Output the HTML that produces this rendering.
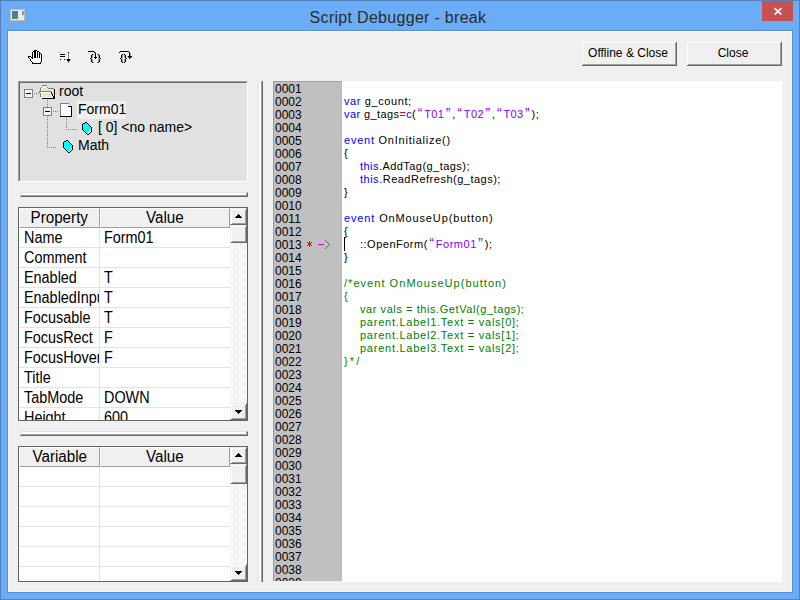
<!DOCTYPE html>
<html><head><meta charset="utf-8">
<style>
*{margin:0;padding:0;box-sizing:border-box}
html,body{width:800px;height:600px;overflow:hidden}
body{position:relative;background:#6aacf6;font-family:"Liberation Sans",sans-serif;color:#000}
.a{position:absolute}
#frame{left:0;top:0;width:800px;height:600px;border:1px solid #5182bd}
#title{left:-2px;top:9px;width:800px;text-align:center;font-size:16px;letter-spacing:0.3px;color:#2c2c2c;white-space:nowrap}
#xbtn{left:762px;top:1px;width:31px;height:20px;background:#c75050}
#client{left:7px;top:30px;width:786px;height:563px;border:1px solid #5a8fd0;background:#f0f0f0}
#client2{left:8px;top:31px;width:784px;height:561px;border:1px solid #f9f7f1}
.btn{height:23px;background:#f0f0f0;border-top:1px solid #fff;border-left:1px solid #fff;box-shadow:inset -1px -1px 0 #a0a0a0;font-size:12px;text-align:center;line-height:20px;padding-right:3px}
.btnout{border-right:1px solid #696969;border-bottom:1px solid #696969}
.sunk{border-top:1px solid #a0a0a0;border-left:1px solid #a0a0a0;border-right:1px solid #fff;border-bottom:1px solid #fff}
.hsplit{height:5px;border-top:1px solid #e3e3e3;border-left:1px solid #e3e3e3;border-bottom:1px solid #696969;border-right:1px solid #696969;background:#fff;box-shadow:inset -1px -1px 0 #a0a0a0}
.vsplit{width:5px;border-left:1px solid #e3e3e3;border-right:1px solid #696969;background:linear-gradient(90deg,#fff 0,#fff 2px,#a0a0a0 2px,#a0a0a0 3px)}
.grid{border:1px solid #646464;background:#fff;overflow:hidden}
.gh{position:absolute;top:0;height:20px;background:#f0f0f0;border-top:1px solid #fff;border-left:1px solid #fff;border-bottom:1px solid #a0a0a0;border-right:1px solid #a0a0a0;font-size:16px;line-height:18px;text-align:center;white-space:nowrap;overflow:hidden}
.gh span{display:inline-block;transform:scaleX(0.95)}
.row{position:absolute;left:0;height:20px;border-bottom:1px solid #e3e3e3;width:211px}
.cell{position:absolute;top:0;height:19px;font-size:16px;line-height:20px;white-space:nowrap;overflow:hidden}
.cell span{display:inline-block;transform:scaleX(0.9);transform-origin:0 0}
.vline{position:absolute;width:1px;background:#e3e3e3}
.sb{position:absolute;width:17px;background:repeating-conic-gradient(#fff 0 25%,#f0f0f0 0 50%) 0 0/2px 2px}
.sbb{position:absolute;left:0;width:17px;height:17px;background:#f0f0f0;border-top:1px solid #f0f0f0;border-left:1px solid #f0f0f0;border-right:1px solid #696969;border-bottom:1px solid #696969;box-shadow:inset 1px 1px 0 #fff,inset -1px -1px 0 #a0a0a0}
#code{left:342px;top:81px;width:440px;height:501px;background:#fff}
#gutter{left:273px;top:81px;width:69px;height:500px;background:#c0c0c0;box-shadow:inset -1px 0 0 #bababa;border-top:1px solid #a0a0a0;border-left:1px solid #a0a0a0;overflow:hidden}
.ln{position:absolute;left:1px;top:1px;font-size:12px;line-height:13px;white-space:pre}
.cd{position:absolute;left:2px;top:1px;font-size:11px;letter-spacing:0.5px;line-height:13px;white-space:pre}
.kw{color:#0000ff}.st{color:#8000ff}.rd{color:#ff0000}.cm{color:#008000}
.q{display:inline-block;width:8px;text-align:center;color:#8000ff;font-size:14px;line-height:10px}
.ind{display:inline-block;width:16px}
.tree{font-size:14px;white-space:nowrap;line-height:18px}
</style></head><body>
<div id="frame" class="a"></div>

<!-- app icon -->
<div class="a" style="left:10px;top:9px;width:15px;height:12px;background:#eeebe6;border:1px solid #c4bcb2"></div>
<div class="a" style="left:12px;top:11px;width:6px;height:8px;background:linear-gradient(160deg,#4a70b0,#3aa060)"></div>
<div class="a" style="left:22px;top:11px;width:2px;height:4px;background:#6a9ad0"></div>
<div id="title" class="a">Script Debugger - break</div>
<div id="xbtn" class="a"><svg width="31" height="20" style="position:absolute;left:0;top:0"><path d="M12.6 7.2 L19.4 13.6 M19.4 7.2 L12.6 13.6" stroke="#fff" stroke-width="1.6"/></svg></div>
<div id="client" class="a"></div>
<div id="client2" class="a"></div>

<!-- toolbar icons -->
<svg class="a" style="left:26px;top:48px" width="18" height="18" shape-rendering="crispEdges"><g fill="#fff"><rect x="10" y="3" width="1" height="1"/><rect x="7" y="4" width="1" height="1"/><rect x="10" y="4" width="1" height="1"/><rect x="12" y="4" width="1" height="1"/><rect x="14" y="4" width="1" height="1"/><rect x="7" y="5" width="1" height="1"/><rect x="10" y="5" width="1" height="1"/><rect x="12" y="5" width="1" height="1"/><rect x="7" y="6" width="1" height="1"/><rect x="10" y="6" width="1" height="1"/><rect x="12" y="6" width="1" height="1"/><rect x="14" y="6" width="1" height="1"/><rect x="7" y="7" width="1" height="1"/><rect x="10" y="7" width="1" height="1"/><rect x="12" y="7" width="1" height="1"/><rect x="14" y="7" width="1" height="1"/><rect x="7" y="8" width="1" height="1"/><rect x="10" y="8" width="1" height="1"/><rect x="12" y="8" width="1" height="1"/><rect x="14" y="8" width="1" height="1"/><rect x="3" y="9" width="1" height="1"/><rect x="4" y="9" width="1" height="1"/><rect x="7" y="9" width="1" height="1"/><rect x="10" y="9" width="1" height="1"/><rect x="12" y="9" width="1" height="1"/><rect x="14" y="9" width="1" height="1"/><rect x="4" y="10" width="1" height="1"/><rect x="5" y="10" width="1" height="1"/><rect x="7" y="10" width="1" height="1"/><rect x="8" y="10" width="1" height="1"/><rect x="9" y="10" width="1" height="1"/><rect x="10" y="10" width="1" height="1"/><rect x="11" y="10" width="1" height="1"/><rect x="12" y="10" width="1" height="1"/><rect x="13" y="10" width="1" height="1"/><rect x="14" y="10" width="1" height="1"/><rect x="5" y="11" width="1" height="1"/><rect x="6" y="11" width="1" height="1"/><rect x="7" y="11" width="1" height="1"/><rect x="8" y="11" width="1" height="1"/><rect x="9" y="11" width="1" height="1"/><rect x="10" y="11" width="1" height="1"/><rect x="11" y="11" width="1" height="1"/><rect x="12" y="11" width="1" height="1"/><rect x="13" y="11" width="1" height="1"/><rect x="14" y="11" width="1" height="1"/><rect x="5" y="12" width="1" height="1"/><rect x="6" y="12" width="1" height="1"/><rect x="7" y="12" width="1" height="1"/><rect x="8" y="12" width="1" height="1"/><rect x="9" y="12" width="1" height="1"/><rect x="10" y="12" width="1" height="1"/><rect x="11" y="12" width="1" height="1"/><rect x="12" y="12" width="1" height="1"/><rect x="13" y="12" width="1" height="1"/><rect x="14" y="12" width="1" height="1"/><rect x="6" y="13" width="1" height="1"/><rect x="7" y="13" width="1" height="1"/><rect x="8" y="13" width="1" height="1"/><rect x="9" y="13" width="1" height="1"/><rect x="10" y="13" width="1" height="1"/><rect x="11" y="13" width="1" height="1"/><rect x="12" y="13" width="1" height="1"/><rect x="13" y="13" width="1" height="1"/><rect x="14" y="13" width="1" height="1"/><rect x="7" y="14" width="1" height="1"/><rect x="8" y="14" width="1" height="1"/><rect x="9" y="14" width="1" height="1"/><rect x="10" y="14" width="1" height="1"/><rect x="11" y="14" width="1" height="1"/><rect x="12" y="14" width="1" height="1"/><rect x="13" y="14" width="1" height="1"/></g><g fill="#000"><rect x="8" y="2" width="1" height="1"/><rect x="9" y="2" width="1" height="1"/><rect x="10" y="2" width="1" height="1"/><rect x="7" y="3" width="1" height="1"/><rect x="8" y="3" width="1" height="1"/><rect x="9" y="3" width="1" height="1"/><rect x="11" y="3" width="1" height="1"/><rect x="12" y="3" width="1" height="1"/><rect x="6" y="4" width="1" height="1"/><rect x="8" y="4" width="1" height="1"/><rect x="9" y="4" width="1" height="1"/><rect x="11" y="4" width="1" height="1"/><rect x="13" y="4" width="1" height="1"/><rect x="6" y="5" width="1" height="1"/><rect x="8" y="5" width="1" height="1"/><rect x="9" y="5" width="1" height="1"/><rect x="11" y="5" width="1" height="1"/><rect x="13" y="5" width="1" height="1"/><rect x="14" y="5" width="1" height="1"/><rect x="6" y="6" width="1" height="1"/><rect x="8" y="6" width="1" height="1"/><rect x="9" y="6" width="1" height="1"/><rect x="11" y="6" width="1" height="1"/><rect x="13" y="6" width="1" height="1"/><rect x="15" y="6" width="1" height="1"/><rect x="6" y="7" width="1" height="1"/><rect x="8" y="7" width="1" height="1"/><rect x="9" y="7" width="1" height="1"/><rect x="11" y="7" width="1" height="1"/><rect x="13" y="7" width="1" height="1"/><rect x="15" y="7" width="1" height="1"/><rect x="2" y="8" width="1" height="1"/><rect x="3" y="8" width="1" height="1"/><rect x="4" y="8" width="1" height="1"/><rect x="6" y="8" width="1" height="1"/><rect x="8" y="8" width="1" height="1"/><rect x="9" y="8" width="1" height="1"/><rect x="11" y="8" width="1" height="1"/><rect x="13" y="8" width="1" height="1"/><rect x="15" y="8" width="1" height="1"/><rect x="2" y="9" width="1" height="1"/><rect x="5" y="9" width="1" height="1"/><rect x="6" y="9" width="1" height="1"/><rect x="8" y="9" width="1" height="1"/><rect x="9" y="9" width="1" height="1"/><rect x="11" y="9" width="1" height="1"/><rect x="13" y="9" width="1" height="1"/><rect x="15" y="9" width="1" height="1"/><rect x="3" y="10" width="1" height="1"/><rect x="6" y="10" width="1" height="1"/><rect x="15" y="10" width="1" height="1"/><rect x="4" y="11" width="1" height="1"/><rect x="15" y="11" width="1" height="1"/><rect x="4" y="12" width="1" height="1"/><rect x="15" y="12" width="1" height="1"/><rect x="5" y="13" width="1" height="1"/><rect x="15" y="13" width="1" height="1"/><rect x="6" y="14" width="1" height="1"/><rect x="14" y="14" width="1" height="1"/><rect x="6" y="15" width="1" height="1"/><rect x="7" y="15" width="1" height="1"/><rect x="8" y="15" width="1" height="1"/><rect x="9" y="15" width="1" height="1"/><rect x="10" y="15" width="1" height="1"/><rect x="11" y="15" width="1" height="1"/><rect x="12" y="15" width="1" height="1"/><rect x="13" y="15" width="1" height="1"/><rect x="14" y="15" width="1" height="1"/></g></svg><svg class="a" style="left:56px;top:48px" width="18" height="18" shape-rendering="crispEdges"><g fill="#888"><rect x="3" y="4" width="1" height="1"/><rect x="12" y="10" width="1" height="1"/><rect x="12" y="5" width="1" height="1"/><rect x="12" y="6" width="1" height="1"/><rect x="12" y="7" width="1" height="1"/><rect x="12" y="8" width="1" height="1"/><rect x="12" y="9" width="1" height="1"/><rect x="10" y="11" width="1" height="1"/><rect x="14" y="11" width="1" height="1"/><rect x="12" y="14" width="1" height="1"/></g><g fill="#000"><rect x="4" y="6" width="1" height="1"/><rect x="5" y="6" width="1" height="1"/><rect x="6" y="6" width="1" height="1"/><rect x="7" y="6" width="1" height="1"/><rect x="8" y="6" width="1" height="1"/><rect x="4" y="8" width="1" height="1"/><rect x="5" y="8" width="1" height="1"/><rect x="6" y="8" width="1" height="1"/><rect x="7" y="8" width="1" height="1"/><rect x="8" y="8" width="1" height="1"/><rect x="12" y="4" width="1" height="1"/><rect x="4" y="11" width="1" height="1"/><rect x="8" y="11" width="1" height="1"/><rect x="11" y="11" width="1" height="1"/><rect x="12" y="11" width="1" height="1"/><rect x="13" y="11" width="1" height="1"/><rect x="11" y="12" width="1" height="1"/><rect x="12" y="12" width="1" height="1"/><rect x="13" y="12" width="1" height="1"/><rect x="12" y="13" width="1" height="1"/></g></svg><svg class="a" style="left:86px;top:48px" width="18" height="18" shape-rendering="crispEdges"><g fill="#999"><rect x="7" y="6" width="1" height="1"/><rect x="11" y="6" width="1" height="1"/><rect x="6" y="7" width="1" height="1"/><rect x="12" y="7" width="1" height="1"/><rect x="6" y="8" width="1" height="1"/><rect x="12" y="8" width="1" height="1"/><rect x="6" y="9" width="1" height="1"/><rect x="12" y="9" width="1" height="1"/><rect x="5" y="10" width="1" height="1"/><rect x="13" y="10" width="1" height="1"/><rect x="6" y="11" width="1" height="1"/><rect x="12" y="11" width="1" height="1"/><rect x="6" y="12" width="1" height="1"/><rect x="12" y="12" width="1" height="1"/><rect x="6" y="13" width="1" height="1"/><rect x="12" y="13" width="1" height="1"/><rect x="7" y="14" width="1" height="1"/><rect x="11" y="14" width="1" height="1"/><rect x="8" y="3" width="1" height="1"/><rect x="9" y="4" width="1" height="1"/></g><g fill="#000"><rect x="2" y="3" width="1" height="1"/><rect x="3" y="3" width="1" height="1"/><rect x="4" y="3" width="1" height="1"/><rect x="5" y="3" width="1" height="1"/><rect x="6" y="3" width="1" height="1"/><rect x="7" y="3" width="1" height="1"/><rect x="8" y="4" width="1" height="1"/><rect x="9" y="5" width="1" height="1"/><rect x="9" y="6" width="1" height="1"/><rect x="6" y="6" width="1" height="1"/><rect x="12" y="6" width="1" height="1"/><rect x="9" y="7" width="1" height="1"/><rect x="5" y="7" width="1" height="1"/><rect x="13" y="7" width="1" height="1"/><rect x="9" y="8" width="1" height="1"/><rect x="5" y="8" width="1" height="1"/><rect x="13" y="8" width="1" height="1"/><rect x="8" y="9" width="1" height="1"/><rect x="9" y="9" width="1" height="1"/><rect x="10" y="9" width="1" height="1"/><rect x="5" y="9" width="1" height="1"/><rect x="13" y="9" width="1" height="1"/><rect x="9" y="10" width="1" height="1"/><rect x="4" y="10" width="1" height="1"/><rect x="14" y="10" width="1" height="1"/><rect x="5" y="11" width="1" height="1"/><rect x="13" y="11" width="1" height="1"/><rect x="5" y="12" width="1" height="1"/><rect x="13" y="12" width="1" height="1"/><rect x="5" y="13" width="1" height="1"/><rect x="13" y="13" width="1" height="1"/><rect x="6" y="14" width="1" height="1"/><rect x="12" y="14" width="1" height="1"/></g></svg><svg class="a" style="left:116px;top:48px" width="18" height="18" shape-rendering="crispEdges"><g fill="#999"><rect x="7" y="6" width="1" height="1"/><rect x="7" y="6" width="1" height="1"/><rect x="14" y="6" width="1" height="1"/><rect x="6" y="7" width="1" height="1"/><rect x="8" y="7" width="1" height="1"/><rect x="14" y="7" width="1" height="1"/><rect x="6" y="8" width="1" height="1"/><rect x="8" y="8" width="1" height="1"/><rect x="11" y="8" width="1" height="1"/><rect x="6" y="9" width="1" height="1"/><rect x="8" y="9" width="1" height="1"/><rect x="12" y="9" width="1" height="1"/><rect x="15" y="9" width="1" height="1"/><rect x="5" y="10" width="1" height="1"/><rect x="9" y="10" width="1" height="1"/><rect x="6" y="11" width="1" height="1"/><rect x="8" y="11" width="1" height="1"/><rect x="6" y="12" width="1" height="1"/><rect x="8" y="12" width="1" height="1"/><rect x="6" y="13" width="1" height="1"/><rect x="8" y="13" width="1" height="1"/><rect x="7" y="14" width="1" height="1"/><rect x="7" y="14" width="1" height="1"/><rect x="14" y="5" width="1" height="1"/></g><g fill="#000"><rect x="4" y="3" width="1" height="1"/><rect x="5" y="3" width="1" height="1"/><rect x="6" y="3" width="1" height="1"/><rect x="7" y="3" width="1" height="1"/><rect x="8" y="3" width="1" height="1"/><rect x="9" y="3" width="1" height="1"/><rect x="10" y="3" width="1" height="1"/><rect x="11" y="3" width="1" height="1"/><rect x="12" y="3" width="1" height="1"/><rect x="3" y="4" width="1" height="1"/><rect x="13" y="4" width="1" height="1"/><rect x="13" y="5" width="1" height="1"/><rect x="13" y="6" width="1" height="1"/><rect x="6" y="6" width="1" height="1"/><rect x="8" y="6" width="1" height="1"/><rect x="13" y="7" width="1" height="1"/><rect x="5" y="7" width="1" height="1"/><rect x="9" y="7" width="1" height="1"/><rect x="12" y="8" width="1" height="1"/><rect x="13" y="8" width="1" height="1"/><rect x="14" y="8" width="1" height="1"/><rect x="15" y="8" width="1" height="1"/><rect x="5" y="8" width="1" height="1"/><rect x="9" y="8" width="1" height="1"/><rect x="13" y="9" width="1" height="1"/><rect x="14" y="9" width="1" height="1"/><rect x="5" y="9" width="1" height="1"/><rect x="9" y="9" width="1" height="1"/><rect x="13" y="10" width="1" height="1"/><rect x="4" y="10" width="1" height="1"/><rect x="10" y="10" width="1" height="1"/><rect x="5" y="11" width="1" height="1"/><rect x="9" y="11" width="1" height="1"/><rect x="5" y="12" width="1" height="1"/><rect x="9" y="12" width="1" height="1"/><rect x="5" y="13" width="1" height="1"/><rect x="9" y="13" width="1" height="1"/><rect x="6" y="14" width="1" height="1"/><rect x="8" y="14" width="1" height="1"/></g></svg>
<!-- buttons -->
<div class="a btnout" style="left:582px;top:42px;width:95px;height:24px"><div class="btn" style="width:94px;height:23px">Offline &amp; Close</div></div>
<div class="a btnout" style="left:687px;top:42px;width:95px;height:24px"><div class="btn" style="width:94px;height:23px">Close</div></div>

<!-- tree panel -->
<div class="a sunk" style="left:18px;top:81px;width:230px;height:101px">
 <div class="a" style="left:0;top:0;width:228px;height:99px;border-top:1px solid #696969;border-left:1px solid #696969;border-right:1px solid #e3e3e3;border-bottom:1px solid #e3e3e3;background:#e1e1e1"></div>
</div>

<div class="a" style="left:24px;top:89px;width:9px;height:9px;border:1px solid #808080;background:#f4f4f4"><div class="a" style="left:1px;top:3px;width:5px;height:1px;background:#000"></div></div><div class="a" style="left:34px;top:93px;width:5px;height:1px;background:repeating-linear-gradient(90deg,#808080 0 1px,transparent 1px 2px)"></div><svg class="a" style="left:38px;top:83px" width="18" height="17" shape-rendering="crispEdges"><rect x="4" y="2" width="1" height="1" fill="#808080"/><rect x="5" y="2" width="1" height="1" fill="#808080"/><rect x="6" y="2" width="1" height="1" fill="#808080"/><rect x="7" y="2" width="1" height="1" fill="#808080"/><rect x="8" y="2" width="1" height="1" fill="#808080"/><rect x="3" y="4" width="1" height="1" fill="#808080"/><rect x="9" y="4" width="1" height="1" fill="#808080"/><rect x="10" y="5" width="1" height="1" fill="#808080"/><rect x="11" y="5" width="1" height="1" fill="#808080"/><rect x="12" y="5" width="1" height="1" fill="#808080"/><rect x="13" y="5" width="1" height="1" fill="#808080"/><rect x="14" y="5" width="1" height="1" fill="#808080"/><rect x="15" y="5" width="1" height="1" fill="#808080"/><rect x="2" y="5" width="1" height="1" fill="#808080"/><rect x="2" y="6" width="1" height="1" fill="#808080"/><rect x="2" y="7" width="1" height="1" fill="#808080"/><rect x="1" y="8" width="1" height="1" fill="#808080"/><rect x="1" y="9" width="1" height="1" fill="#808080"/><rect x="2" y="8" width="1" height="1" fill="#808080"/><rect x="3" y="8" width="1" height="1" fill="#808080"/><rect x="4" y="8" width="1" height="1" fill="#808080"/><rect x="5" y="8" width="1" height="1" fill="#808080"/><rect x="6" y="8" width="1" height="1" fill="#808080"/><rect x="7" y="8" width="1" height="1" fill="#808080"/><rect x="8" y="8" width="1" height="1" fill="#808080"/><rect x="9" y="8" width="1" height="1" fill="#808080"/><rect x="10" y="8" width="1" height="1" fill="#808080"/><rect x="11" y="8" width="1" height="1" fill="#808080"/><rect x="12" y="8" width="1" height="1" fill="#808080"/><rect x="2" y="10" width="1" height="1" fill="#808080"/><rect x="2" y="11" width="1" height="1" fill="#808080"/><rect x="2" y="12" width="1" height="1" fill="#808080"/><rect x="2" y="13" width="1" height="1" fill="#808080"/><rect x="4" y="4" width="1" height="1" fill="#fff"/><rect x="5" y="4" width="1" height="1" fill="#fff"/><rect x="6" y="4" width="1" height="1" fill="#fff"/><rect x="7" y="4" width="1" height="1" fill="#fff"/><rect x="8" y="4" width="1" height="1" fill="#fff"/><rect x="3" y="5" width="1" height="1" fill="#fff"/><rect x="3" y="6" width="1" height="1" fill="#fff"/><rect x="3" y="7" width="1" height="1" fill="#fff"/><rect x="2" y="9" width="1" height="1" fill="#fff"/><rect x="3" y="9" width="1" height="1" fill="#fff"/><rect x="4" y="9" width="1" height="1" fill="#fff"/><rect x="5" y="9" width="1" height="1" fill="#fff"/><rect x="6" y="9" width="1" height="1" fill="#fff"/><rect x="7" y="9" width="1" height="1" fill="#fff"/><rect x="8" y="9" width="1" height="1" fill="#fff"/><rect x="9" y="9" width="1" height="1" fill="#fff"/><rect x="10" y="9" width="1" height="1" fill="#fff"/><rect x="11" y="9" width="1" height="1" fill="#fff"/><rect x="12" y="9" width="1" height="1" fill="#fff"/><rect x="3" y="10" width="1" height="1" fill="#fff"/><rect x="3" y="11" width="1" height="1" fill="#fff"/><rect x="3" y="12" width="1" height="1" fill="#fff"/><rect x="3" y="13" width="1" height="1" fill="#fff"/><rect x="4" y="14" width="1" height="1" fill="#fff"/><rect x="5" y="14" width="1" height="1" fill="#fff"/><rect x="6" y="14" width="1" height="1" fill="#fff"/><rect x="7" y="14" width="1" height="1" fill="#fff"/><rect x="8" y="14" width="1" height="1" fill="#fff"/><rect x="9" y="14" width="1" height="1" fill="#fff"/><rect x="10" y="14" width="1" height="1" fill="#fff"/><rect x="11" y="14" width="1" height="1" fill="#fff"/><rect x="12" y="14" width="1" height="1" fill="#fff"/><rect x="13" y="14" width="1" height="1" fill="#fff"/><rect x="14" y="14" width="1" height="1" fill="#fff"/><rect x="5" y="5" width="1" height="1" fill="#ffff00"/><rect x="7" y="5" width="1" height="1" fill="#ffff00"/><rect x="9" y="5" width="1" height="1" fill="#ffff00"/><rect x="4" y="6" width="1" height="1" fill="#ffff00"/><rect x="6" y="6" width="1" height="1" fill="#ffff00"/><rect x="8" y="6" width="1" height="1" fill="#ffff00"/><rect x="10" y="6" width="1" height="1" fill="#ffff00"/><rect x="12" y="6" width="1" height="1" fill="#ffff00"/><rect x="14" y="6" width="1" height="1" fill="#ffff00"/><rect x="5" y="7" width="1" height="1" fill="#ffff00"/><rect x="7" y="7" width="1" height="1" fill="#ffff00"/><rect x="9" y="7" width="1" height="1" fill="#ffff00"/><rect x="11" y="7" width="1" height="1" fill="#ffff00"/><rect x="13" y="7" width="1" height="1" fill="#ffff00"/><rect x="15" y="7" width="1" height="1" fill="#ffff00"/><rect x="4" y="10" width="1" height="1" fill="#ffff00"/><rect x="6" y="10" width="1" height="1" fill="#ffff00"/><rect x="8" y="10" width="1" height="1" fill="#ffff00"/><rect x="10" y="10" width="1" height="1" fill="#ffff00"/><rect x="12" y="10" width="1" height="1" fill="#ffff00"/><rect x="5" y="11" width="1" height="1" fill="#ffff00"/><rect x="7" y="11" width="1" height="1" fill="#ffff00"/><rect x="9" y="11" width="1" height="1" fill="#ffff00"/><rect x="11" y="11" width="1" height="1" fill="#ffff00"/><rect x="13" y="11" width="1" height="1" fill="#ffff00"/><rect x="4" y="12" width="1" height="1" fill="#ffff00"/><rect x="6" y="12" width="1" height="1" fill="#ffff00"/><rect x="8" y="12" width="1" height="1" fill="#ffff00"/><rect x="10" y="12" width="1" height="1" fill="#ffff00"/><rect x="12" y="12" width="1" height="1" fill="#ffff00"/><rect x="5" y="13" width="1" height="1" fill="#ffff00"/><rect x="7" y="13" width="1" height="1" fill="#ffff00"/><rect x="9" y="13" width="1" height="1" fill="#ffff00"/><rect x="11" y="13" width="1" height="1" fill="#ffff00"/><rect x="13" y="13" width="1" height="1" fill="#ffff00"/><rect x="4" y="5" width="1" height="1" fill="#e8e8d0"/><rect x="6" y="5" width="1" height="1" fill="#e8e8d0"/><rect x="8" y="5" width="1" height="1" fill="#e8e8d0"/><rect x="5" y="6" width="1" height="1" fill="#e8e8d0"/><rect x="7" y="6" width="1" height="1" fill="#e8e8d0"/><rect x="9" y="6" width="1" height="1" fill="#e8e8d0"/><rect x="11" y="6" width="1" height="1" fill="#e8e8d0"/><rect x="13" y="6" width="1" height="1" fill="#e8e8d0"/><rect x="15" y="6" width="1" height="1" fill="#e8e8d0"/><rect x="4" y="7" width="1" height="1" fill="#e8e8d0"/><rect x="6" y="7" width="1" height="1" fill="#e8e8d0"/><rect x="8" y="7" width="1" height="1" fill="#e8e8d0"/><rect x="10" y="7" width="1" height="1" fill="#e8e8d0"/><rect x="12" y="7" width="1" height="1" fill="#e8e8d0"/><rect x="14" y="7" width="1" height="1" fill="#e8e8d0"/><rect x="5" y="10" width="1" height="1" fill="#e8e8d0"/><rect x="7" y="10" width="1" height="1" fill="#e8e8d0"/><rect x="9" y="10" width="1" height="1" fill="#e8e8d0"/><rect x="11" y="10" width="1" height="1" fill="#e8e8d0"/><rect x="4" y="11" width="1" height="1" fill="#e8e8d0"/><rect x="6" y="11" width="1" height="1" fill="#e8e8d0"/><rect x="8" y="11" width="1" height="1" fill="#e8e8d0"/><rect x="10" y="11" width="1" height="1" fill="#e8e8d0"/><rect x="12" y="11" width="1" height="1" fill="#e8e8d0"/><rect x="5" y="12" width="1" height="1" fill="#e8e8d0"/><rect x="7" y="12" width="1" height="1" fill="#e8e8d0"/><rect x="9" y="12" width="1" height="1" fill="#e8e8d0"/><rect x="11" y="12" width="1" height="1" fill="#e8e8d0"/><rect x="13" y="12" width="1" height="1" fill="#e8e8d0"/><rect x="4" y="13" width="1" height="1" fill="#e8e8d0"/><rect x="6" y="13" width="1" height="1" fill="#e8e8d0"/><rect x="8" y="13" width="1" height="1" fill="#e8e8d0"/><rect x="10" y="13" width="1" height="1" fill="#e8e8d0"/><rect x="12" y="13" width="1" height="1" fill="#e8e8d0"/><rect x="14" y="13" width="1" height="1" fill="#e8e8d0"/><rect x="13" y="9" width="1" height="1" fill="#000"/><rect x="13" y="10" width="1" height="1" fill="#000"/><rect x="14" y="11" width="1" height="1" fill="#000"/><rect x="14" y="12" width="1" height="1" fill="#000"/><rect x="15" y="13" width="1" height="1" fill="#000"/><rect x="16" y="6" width="1" height="1" fill="#000"/><rect x="16" y="7" width="1" height="1" fill="#000"/><rect x="16" y="8" width="1" height="1" fill="#000"/><rect x="16" y="9" width="1" height="1" fill="#000"/><rect x="16" y="10" width="1" height="1" fill="#000"/><rect x="16" y="11" width="1" height="1" fill="#000"/><rect x="16" y="12" width="1" height="1" fill="#000"/><rect x="16" y="13" width="1" height="1" fill="#000"/><rect x="16" y="14" width="1" height="1" fill="#000"/><rect x="16" y="15" width="1" height="1" fill="#000"/><rect x="4" y="15" width="1" height="1" fill="#000"/><rect x="5" y="15" width="1" height="1" fill="#000"/><rect x="6" y="15" width="1" height="1" fill="#000"/><rect x="7" y="15" width="1" height="1" fill="#000"/><rect x="8" y="15" width="1" height="1" fill="#000"/><rect x="9" y="15" width="1" height="1" fill="#000"/><rect x="10" y="15" width="1" height="1" fill="#000"/><rect x="11" y="15" width="1" height="1" fill="#000"/><rect x="12" y="15" width="1" height="1" fill="#000"/><rect x="13" y="15" width="1" height="1" fill="#000"/><rect x="14" y="15" width="1" height="1" fill="#000"/><rect x="15" y="15" width="1" height="1" fill="#000"/><rect x="16" y="15" width="1" height="1" fill="#000"/><rect x="15" y="14" width="1" height="1" fill="#000"/></svg><div class="a tree" style="left:59px;top:82px">root</div><div class="a" style="left:47px;top:100px;width:1px;height:7px;background:repeating-linear-gradient(180deg,#808080 0 1px,transparent 1px 2px)"></div><div class="a" style="left:43px;top:107px;width:9px;height:9px;border:1px solid #808080;background:#f4f4f4"><div class="a" style="left:1px;top:3px;width:5px;height:1px;background:#000"></div></div><div class="a" style="left:53px;top:111px;width:6px;height:1px;background:repeating-linear-gradient(90deg,#808080 0 1px,transparent 1px 2px)"></div><svg class="a" style="left:60px;top:103px" width="13" height="14" viewBox="0 0 13 14" shape-rendering="crispEdges">
<path d="M1 1h8v1h1v1h1v10h-10z" fill="#fff"/>
<rect x="0" y="0" width="1" height="14" fill="#808080"/><rect x="0" y="0" width="9" height="1" fill="#808080"/>
<rect x="9" y="1" width="1" height="1" fill="#c0c0c0"/><rect x="10" y="2" width="1" height="1" fill="#c0c0c0"/>
<rect x="8" y="3" width="4" height="1" fill="#000"/><rect x="11" y="3" width="1" height="11" fill="#000"/><rect x="0" y="13" width="12" height="1" fill="#000"/>
<rect x="6" y="13" width="1" height="1" fill="#0000a0"/>
</svg><div class="a" style="left:77px;top:101px;width:49px;height:18px;background:#f0f0f0"></div><div class="a tree" style="left:78px;top:100px">Form01</div><div class="a" style="left:66px;top:117px;width:1px;height:12px;background:repeating-linear-gradient(180deg,#808080 0 1px,transparent 1px 2px)"></div><div class="a" style="left:66px;top:129px;width:11px;height:1px;background:repeating-linear-gradient(90deg,#808080 0 1px,transparent 1px 2px)"></div><svg class="a" style="left:82px;top:122px" width="11" height="13" shape-rendering="crispEdges"><rect x="3" y="0" width="2" height="1" fill="#000"/><rect x="1" y="1" width="2" height="1" fill="#000"/><rect x="3" y="1" width="2" height="1" fill="#00ffff"/><rect x="5" y="1" width="1" height="1" fill="#000"/><rect x="0" y="2" width="1" height="1" fill="#000"/><rect x="1" y="2" width="5" height="1" fill="#00ffff"/><rect x="6" y="2" width="1" height="1" fill="#000"/><rect x="0" y="3" width="1" height="1" fill="#000"/><rect x="1" y="3" width="6" height="1" fill="#00ffff"/><rect x="7" y="3" width="1" height="1" fill="#000"/><rect x="0" y="4" width="1" height="1" fill="#000"/><rect x="1" y="4" width="7" height="1" fill="#00ffff"/><rect x="8" y="4" width="1" height="1" fill="#000"/><rect x="0" y="5" width="1" height="1" fill="#000"/><rect x="1" y="5" width="8" height="1" fill="#00ffff"/><rect x="9" y="5" width="1" height="1" fill="#000"/><rect x="0" y="6" width="1" height="1" fill="#000"/><rect x="1" y="6" width="8" height="1" fill="#00ffff"/><rect x="9" y="6" width="1" height="1" fill="#000"/><rect x="0" y="7" width="1" height="1" fill="#000"/><rect x="1" y="7" width="8" height="1" fill="#00ffff"/><rect x="9" y="7" width="1" height="1" fill="#000"/><rect x="1" y="8" width="1" height="1" fill="#000"/><rect x="2" y="8" width="6" height="1" fill="#00ffff"/><rect x="8" y="8" width="1" height="1" fill="#f4f4f4"/><rect x="9" y="8" width="1" height="1" fill="#000"/><rect x="2" y="9" width="1" height="1" fill="#000"/><rect x="3" y="9" width="4" height="1" fill="#00ffff"/><rect x="7" y="9" width="2" height="1" fill="#f4f4f4"/><rect x="9" y="9" width="1" height="1" fill="#000"/><rect x="3" y="10" width="1" height="1" fill="#000"/><rect x="4" y="10" width="2" height="1" fill="#00ffff"/><rect x="6" y="10" width="2" height="1" fill="#f4f4f4"/><rect x="8" y="10" width="1" height="1" fill="#000"/><rect x="4" y="11" width="1" height="1" fill="#000"/><rect x="5" y="11" width="2" height="1" fill="#f4f4f4"/><rect x="7" y="11" width="1" height="1" fill="#000"/><rect x="5" y="12" width="2" height="1" fill="#000"/></svg><div class="a tree" style="left:98px;top:118px">[ 0] &lt;no name&gt;</div><div class="a" style="left:47px;top:117px;width:1px;height:30px;background:repeating-linear-gradient(180deg,#808080 0 1px,transparent 1px 2px)"></div><div class="a" style="left:47px;top:147px;width:10px;height:1px;background:repeating-linear-gradient(90deg,#808080 0 1px,transparent 1px 2px)"></div><svg class="a" style="left:63px;top:140px" width="11" height="13" shape-rendering="crispEdges"><rect x="3" y="0" width="2" height="1" fill="#000"/><rect x="1" y="1" width="2" height="1" fill="#000"/><rect x="3" y="1" width="2" height="1" fill="#00ffff"/><rect x="5" y="1" width="1" height="1" fill="#000"/><rect x="0" y="2" width="1" height="1" fill="#000"/><rect x="1" y="2" width="5" height="1" fill="#00ffff"/><rect x="6" y="2" width="1" height="1" fill="#000"/><rect x="0" y="3" width="1" height="1" fill="#000"/><rect x="1" y="3" width="6" height="1" fill="#00ffff"/><rect x="7" y="3" width="1" height="1" fill="#000"/><rect x="0" y="4" width="1" height="1" fill="#000"/><rect x="1" y="4" width="7" height="1" fill="#00ffff"/><rect x="8" y="4" width="1" height="1" fill="#000"/><rect x="0" y="5" width="1" height="1" fill="#000"/><rect x="1" y="5" width="8" height="1" fill="#00ffff"/><rect x="9" y="5" width="1" height="1" fill="#000"/><rect x="0" y="6" width="1" height="1" fill="#000"/><rect x="1" y="6" width="8" height="1" fill="#00ffff"/><rect x="9" y="6" width="1" height="1" fill="#000"/><rect x="0" y="7" width="1" height="1" fill="#000"/><rect x="1" y="7" width="8" height="1" fill="#00ffff"/><rect x="9" y="7" width="1" height="1" fill="#000"/><rect x="1" y="8" width="1" height="1" fill="#000"/><rect x="2" y="8" width="6" height="1" fill="#00ffff"/><rect x="8" y="8" width="1" height="1" fill="#f4f4f4"/><rect x="9" y="8" width="1" height="1" fill="#000"/><rect x="2" y="9" width="1" height="1" fill="#000"/><rect x="3" y="9" width="4" height="1" fill="#00ffff"/><rect x="7" y="9" width="2" height="1" fill="#f4f4f4"/><rect x="9" y="9" width="1" height="1" fill="#000"/><rect x="3" y="10" width="1" height="1" fill="#000"/><rect x="4" y="10" width="2" height="1" fill="#00ffff"/><rect x="6" y="10" width="2" height="1" fill="#f4f4f4"/><rect x="8" y="10" width="1" height="1" fill="#000"/><rect x="4" y="11" width="1" height="1" fill="#000"/><rect x="5" y="11" width="2" height="1" fill="#f4f4f4"/><rect x="7" y="11" width="1" height="1" fill="#000"/><rect x="5" y="12" width="2" height="1" fill="#000"/></svg><div class="a tree" style="left:78px;top:136px">Math</div>
<div class="a hsplit" style="left:20px;top:192px;width:228px"></div>
<div class="a hsplit" style="left:20px;top:431px;width:228px"></div>
<div class="a vsplit" style="left:258px;top:81px;height:501px"></div>
<div class="a grid" style="left:18px;top:207px;width:230px;height:214px"><div class="gh" style="left:0;width:81px"><span>Property</span></div><div class="gh" style="left:81px;width:130px"><span>Value</span></div><div class="row" style="top:20px"></div><div class="cell" style="left:5px;top:20px;width:75px"><span>Name</span></div><div class="cell" style="left:85px;top:20px;width:124px"><span>Form01</span></div><div class="row" style="top:40px"></div><div class="cell" style="left:5px;top:40px;width:75px"><span>Comment</span></div><div class="cell" style="left:85px;top:40px;width:124px"><span></span></div><div class="row" style="top:60px"></div><div class="cell" style="left:5px;top:60px;width:75px"><span>Enabled</span></div><div class="cell" style="left:85px;top:60px;width:124px"><span>T</span></div><div class="row" style="top:80px"></div><div class="cell" style="left:5px;top:80px;width:75px"><span>EnabledInput</span></div><div class="cell" style="left:85px;top:80px;width:124px"><span>T</span></div><div class="row" style="top:100px"></div><div class="cell" style="left:5px;top:100px;width:75px"><span>Focusable</span></div><div class="cell" style="left:85px;top:100px;width:124px"><span>T</span></div><div class="row" style="top:120px"></div><div class="cell" style="left:5px;top:120px;width:75px"><span>FocusRect</span></div><div class="cell" style="left:85px;top:120px;width:124px"><span>F</span></div><div class="row" style="top:140px"></div><div class="cell" style="left:5px;top:140px;width:75px"><span>FocusHover</span></div><div class="cell" style="left:85px;top:140px;width:124px"><span>F</span></div><div class="row" style="top:160px"></div><div class="cell" style="left:5px;top:160px;width:75px"><span>Title</span></div><div class="cell" style="left:85px;top:160px;width:124px"><span></span></div><div class="row" style="top:180px"></div><div class="cell" style="left:5px;top:180px;width:75px"><span>TabMode</span></div><div class="cell" style="left:85px;top:180px;width:124px"><span>DOWN</span></div><div class="row" style="top:200px"></div><div class="cell" style="left:5px;top:200px;width:75px"><span>Height</span></div><div class="cell" style="left:85px;top:200px;width:124px"><span>600</span></div><div class="vline" style="left:80px;top:20px;height:192px"></div><div class="sb" style="left:211px;top:0;height:212px"></div><div class="sbb" style="top:0;left:211px"><svg width="15" height="15" style="position:absolute;left:0;top:0" shape-rendering="crispEdges"><path d="M4 9h7v-1h-1v-1h-1v-1h-1v-1h-1v1h-1v1h-1v1h-1z" fill="#000"/></svg></div><div class="sbb" style="top:17px;left:211px;height:18px"></div><div class="sbb" style="top:195px;left:211px"><svg width="15" height="15" style="position:absolute;left:0;top:0" shape-rendering="crispEdges"><path d="M4 6h7v1h-1v1h-1v1h-1v1h-1v-1h-1v-1h-1v-1h-1z" fill="#000"/></svg></div></div>
<div class="a grid" style="left:18px;top:446px;width:230px;height:136px"><div class="gh" style="left:0;width:81px"><span>Variable</span></div><div class="gh" style="left:81px;width:130px"><span>Value</span></div><div class="row" style="top:20px"></div><div class="row" style="top:40px"></div><div class="row" style="top:60px"></div><div class="row" style="top:80px"></div><div class="row" style="top:100px"></div><div class="row" style="top:120px"></div><div class="vline" style="left:80px;top:20px;height:114px"></div><div class="sb" style="left:211px;top:0;height:134px"></div><div class="sbb" style="top:0;left:211px"><svg width="15" height="15" style="position:absolute;left:0;top:0" shape-rendering="crispEdges"><path d="M4 9h7v-1h-1v-1h-1v-1h-1v-1h-1v1h-1v1h-1v1h-1z" fill="#000"/></svg></div><div class="sbb" style="top:17px;left:211px;height:20px"></div><div class="sbb" style="top:117px;left:211px"><svg width="15" height="15" style="position:absolute;left:0;top:0" shape-rendering="crispEdges"><path d="M4 6h7v1h-1v1h-1v1h-1v1h-1v-1h-1v-1h-1v-1h-1z" fill="#000"/></svg></div></div>
<div id="code" class="a"><div class="cd">
<span style="letter-spacing:0.6px"><span class="kw">var</span> g_count;</span>
<span style="letter-spacing:0.4px"><span class="kw">var</span> g_tags<span class="rd">=</span><span class="kw">c</span>(<span class="q">“</span><span class="st">T01</span><span class="q">”</span>,<span class="q">“</span><span class="st">T02</span><span class="q">”</span>,<span class="q">“</span><span class="st">T03</span><span class="q">”</span>);</span>

<span style="letter-spacing:0.76px"><span class="kw">event</span> OnInitialize()</span>
{
<span style="letter-spacing:0.45px"><span class="ind"></span><span class="kw">this</span>.AddTag(g_tags);</span>
<span class="ind"></span><span class="kw">this</span>.ReadRefresh(g_tags);
}

<span style="letter-spacing:0.86px"><span class="kw">event</span> OnMouseUp(button)</span>
{
<span class="ind"></span>::OpenForm(<span class="q">“</span><span class="st">Form01</span><span class="q">”</span>);
}

<span style="letter-spacing:1.04px"><span class="cm">/*event OnMouseUp(button)</span></span>
<span class="cm">{</span>
<span style="letter-spacing:0.57px"><span class="cm"><span class="ind"></span>var vals = this.GetVal(g_tags);</span></span>
<span style="letter-spacing:0.75px"><span class="cm"><span class="ind"></span>parent.Label1.Text = vals[0];</span></span>
<span style="letter-spacing:0.75px"><span class="cm"><span class="ind"></span>parent.Label2.Text = vals[1];</span></span>
<span style="letter-spacing:0.75px"><span class="cm"><span class="ind"></span>parent.Label3.Text = vals[2];</span></span>
<span style="letter-spacing:2.2px"><span class="cm">}*/</span></span></div></div>
<div id="gutter" class="a"><div class="ln">0001
0002
0003
0004
0005
0006
0007
0008
0009
0010
0011
0012
0013
0014
0015
0016
0017
0018
0019
0020
0021
0022
0023
0024
0025
0026
0027
0028
0029
0030
0031
0032
0033
0034
0035
0036
0037
0038
0039</div></div>
<svg class="a" style="left:305px;top:238px" width="28" height="13" shape-rendering="crispEdges"><g fill="#ff0000"><rect x="4" y="3" width="1" height="1"/><rect x="2" y="4" width="1" height="1"/><rect x="4" y="4" width="1" height="1"/><rect x="6" y="4" width="1" height="1"/><rect x="3" y="5" width="1" height="1"/><rect x="4" y="5" width="1" height="1"/><rect x="5" y="5" width="1" height="1"/><rect x="3" y="6" width="1" height="1"/><rect x="4" y="6" width="1" height="1"/><rect x="5" y="6" width="1" height="1"/><rect x="2" y="7" width="1" height="1"/><rect x="4" y="7" width="1" height="1"/><rect x="6" y="7" width="1" height="1"/><rect x="4" y="8" width="1" height="1"/></g><g fill="#ff00ff"><rect x="13" y="6" width="1" height="1"/><rect x="14" y="6" width="1" height="1"/><rect x="15" y="6" width="1" height="1"/><rect x="16" y="6" width="1" height="1"/><rect x="17" y="6" width="1" height="1"/><rect x="18" y="6" width="1" height="1"/><rect x="20" y="2" width="1" height="1"/><rect x="21" y="3" width="1" height="1"/><rect x="22" y="4" width="1" height="1"/><rect x="23" y="5" width="1" height="1"/><rect x="24" y="6" width="1" height="1"/><rect x="23" y="7" width="1" height="1"/><rect x="22" y="8" width="1" height="1"/><rect x="21" y="9" width="1" height="1"/><rect x="20" y="10" width="1" height="1"/></g></svg>
<div class="a" style="left:344px;top:237px;width:1px;height:14px;background:#000"></div><div class="a" style="left:345px;top:237px;width:1px;height:1px;background:#000"></div>
</body></html>
